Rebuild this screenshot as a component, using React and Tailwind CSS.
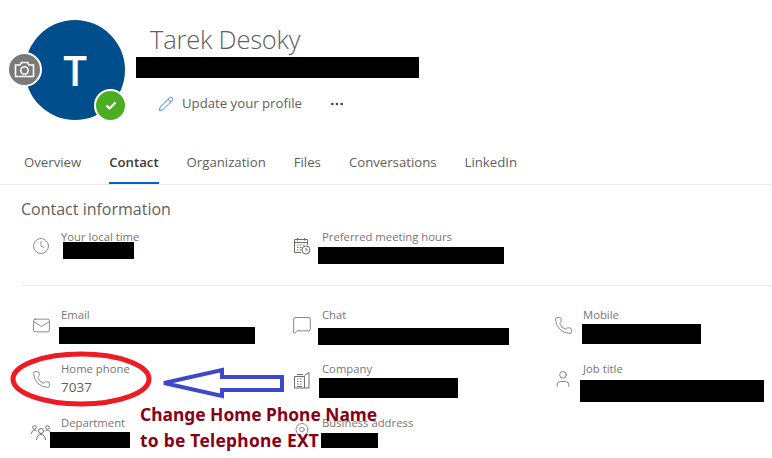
import React from "react";
import { Clock, Mail, MessageSquare, Phone, User, MapPin, Pencil, Check, MoreHorizontal } from "lucide-react";

function CameraIcon() {
  return (
    <svg width="21" height="19" viewBox="0 0 21 19" fill="none" stroke="#ffffff" strokeWidth="1.6">
      <path d="M1.500 5h4.500l1.500-2.500h6L15 5h4.500v11.500h-18z" />
      <circle cx="10.500" cy="10.500" r="3.700" />
    </svg>
  );
}
function CalIcon() {
  return (
    <svg width="20" height="20" viewBox="0 0 20 20" fill="none" stroke="#6f6d6b" strokeWidth="1">
      <path d="M9 16.500H2.500V3.500h13V9" />
      <path d="M2.500 6.500h13M5.500 2v2.500M12.500 2v2.500" />
      <path d="M5 9h1.500M8 9h1.500M11 9h1.500M5 11.500h1.500M8 11.500h1.500M5 14h1.500M8 14h1.500" />
      <circle cx="14" cy="14" r="4" fill="#fff" />
      <path d="M14 11.800V14h2" />
    </svg>
  );
}
function BuildingIcon() {
  return (
    <svg width="20" height="20" viewBox="0 0 20 20" fill="none" stroke="#6f6d6b" strokeWidth="1">
      <path d="M2.500 18V6.500h10V18zM12.500 5.500l4.500-3V18h-4.500" />
      <path d="M5 9h1.500M8 9h1.500M5 11.500h1.500M8 11.500h1.500M5 14h1.500M8 14h1.500M5 16.500h5" />
      <path d="M5 4.500h6" />
    </svg>
  );
}
function PeopleIcon() {
  return (
    <svg width="20" height="20" viewBox="0 0 20 20" fill="none" stroke="#6f6d6b" strokeWidth="1">
      <circle cx="10" cy="8" r="2.500" />
      <path d="M5.500 17c.5-3.500 2-5.500 4.500-5.500s4 2 4.500 5.500" />
      <circle cx="3.500" cy="4.500" r="1.800" />
      <path d="M.5 11c.2-2.500 1.300-3.800 3-3.800 .8 0 1.500.3 2 .8" />
      <circle cx="16.500" cy="4.500" r="1.800" />
      <path d="M19.500 11c-.2-2.500-1.300-3.800-3-3.800-.8 0-1.500.3-2 .8" />
    </svg>
  );
}

const stroke = { size: 18, strokeWidth: 1, color: "#6f6d6b" };

function Item({ icon, iconClass, label, value, barClass }) {
  return (
    <div className="flex h-[54px] min-w-0">
      <div className={`w-5 h-5 flex items-center justify-center shrink-0 ${iconClass}`}>{icon}</div>
      <div className="ml-[10px] min-w-0">
        <div className="text-[11.3px] leading-4 text-[#777573] whitespace-nowrap">{label}</div>
        {value ? <div className="text-[13.500px] leading-5 text-[#605e5c]">{value}</div> : null}
        {barClass ? <div className={`bg-black ${barClass}`} /> : null}
      </div>
    </div>
  );
}

const tabs = ["Overview", "Contact", "Organization", "Files", "Conversations", "LinkedIn"];

export default function App() {
  return (
    <div className="relative w-[772px] h-[458px] overflow-hidden bg-white font-['Open_Sans',sans-serif]">
      {/* Header */}
      <header className="flex h-[141px] pt-5 pl-[25px]">
        <div className="relative w-[100px] h-[100px] rounded-full bg-[#004e8c] flex items-center justify-center shrink-0">
          <span className="text-white text-[42px] leading-none font-semibold">T</span>
          <div className="absolute left-[-18px] top-[32px] w-[35px] h-[35px] rounded-full bg-[#7a7a7a] border-2 border-white flex items-center justify-center">
            <CameraIcon />
          </div>
          <div className="absolute left-[69px] top-[69px] w-[33px] h-[33px] rounded-full bg-[#4bae20] border-2 border-white flex items-center justify-center">
            <Check size={12} strokeWidth={4.500} color="#ffffff" />
          </div>
        </div>
        <div className="ml-[25px]">
          <h1 className="mt-[1px] h-[36px] text-[25.500px] leading-[36px] font-light text-[#5f5e5c] tracking-[-0.2px]">Tarek Desoky</h1>
          <div className="ml-[-14px] w-[283px] h-[21px] bg-black" />
          <div className="flex items-center h-6 mt-[14px] ml-2">
            <Pencil size={16} strokeWidth={1.200} color="#0f6cbd" className="shrink-0" />
            <span className="ml-2 text-[13.200px] text-[#605e5c] whitespace-nowrap">Update your profile</span>
            <MoreHorizontal size={16} strokeWidth={2} color="#444" className="ml-[27px]" />
          </div>
        </div>
      </header>

      {/* Tabs */}
      <nav className="flex h-[44px] gap-7 pl-6 border-b border-[#edebe9]">
        {tabs.map((t) => (
          <div
            key={t}
            className={
              t === "Contact"
                ? "h-[43px] flex items-center text-[13.200px] font-semibold text-[#3b3a39] border-b-2 border-[#0067b8] pt-[3px]"
                : "h-[43px] flex items-center text-[13.200px] text-[#605e5c] pt-[1px]"
            }
          >
            {t}
          </div>
        ))}
      </nav>

      {/* Contact */}
      <section>
        <h2 className="pl-[21px] pt-3 text-[16px] leading-6 text-[#5f5e5c] h-[44px]">Contact information</h2>
        <div className="grid grid-cols-[261px_261px_1fr] pl-[31px] h-[56px]">
          <Item icon={<Clock {...stroke} />} iconClass="mt-[7px]" label="Your local time" barClass="ml-[2px] mt-[-3px] w-[71px] h-[17px]" />
          <Item icon={<CalIcon />} iconClass="mt-[7px]" label="Preferred meeting hours" barClass="ml-[-4px] mt-[2px] w-[186px] h-[17px]" />
        </div>
        <div className="ml-[21px] h-px bg-[#edebe9]" />
        <div className="grid grid-cols-[261px_261px_1fr] pl-[31px] pt-[21px]">
          <Item icon={<Mail {...stroke} size={19} />} iconClass="mt-2" label="Email" barClass="ml-[-2px] mt-1 w-[196px] h-[17px]" />
          <Item icon={<MessageSquare {...stroke} size={20} />} iconClass="mt-2" label="Chat" barClass="ml-[-4px] mt-[5px] w-[191px] h-[17px]" />
          <Item icon={<Phone {...stroke} size={19} />} iconClass="mt-2" label="Mobile" barClass="ml-[-1px] mt-[1px] w-[119px] h-5" />
          <Item icon={<Phone {...stroke} size={19} />} iconClass="mt-2" label="Home phone" value="7037" />
          <Item icon={<BuildingIcon />} iconClass="mt-[9px]" label="Company" barClass="ml-[-3px] mt-[1px] w-[139px] h-5" />
          <Item icon={<User {...stroke} size={22} />} iconClass="mt-2" label="Job title" barClass="ml-[-3px] mt-[3px] w-[184px] h-[22px]" />
          <Item icon={<PeopleIcon />} iconClass="mt-2" label="Department" barClass="ml-[-11px] mt-[1px] w-20 h-4" />
          <Item icon={<MapPin {...stroke} />} iconClass="mt-[6px]" label="Business address" barClass="ml-[-1px] mt-[2px] w-[57px] h-[15px]" />
        </div>
      </section>

      {/* Annotations drawn over the screenshot */}
      <svg className="absolute left-0 top-0 pointer-events-none" width="772" height="458" fill="none">
        <ellipse cx="81" cy="379" rx="68" ry="25" stroke="#ed1c24" strokeWidth="5" />
        <path d="M164 383 L222 370 L222 377 L282 377 L282 390 L222 390 L222 396 Z" stroke="#3f48cc" strokeWidth="4" strokeLinejoin="miter" />
      </svg>
      <div className="absolute left-[140px] top-[401px] text-[17.400px] leading-[26px] font-bold text-[#880015] whitespace-nowrap font-['Noto_Sans',sans-serif]">
        <div>Change Home Phone Name</div>
        <div className="tracking-[0.25px]">to be Telephone EXT</div>
      </div>
    </div>
  );
}
